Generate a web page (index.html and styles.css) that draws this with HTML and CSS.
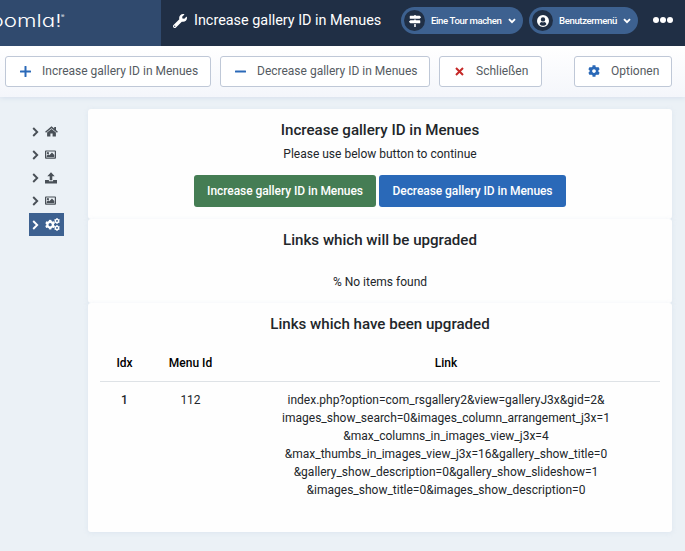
FILE: index.html
```html
<!DOCTYPE html>
<html lang="de">
<head>
<meta charset="utf-8">
<title>Increase gallery ID in Menues</title>
<link rel="stylesheet" href="styles.css">
</head>
<body>
<svg class="defs" aria-hidden="true">
  <symbol id="wrench" viewBox="0 0 512 512"><path d="M507.73 109.1c-2.24-9.03-13.54-12.09-20.12-5.51l-74.36 74.36-67.88-11.31-11.31-67.88 74.36-74.36c6.62-6.62 3.43-17.9-5.66-20.16-47.38-11.74-99.55.91-136.58 37.93-39.64 39.64-50.55 97.1-34.05 147.2L18.74 402.76c-24.99 24.99-24.99 65.51 0 90.5 24.99 24.99 65.51 24.99 90.5 0l213.21-213.21c50.12 16.71 107.47 5.68 147.37-34.22 37.07-37.07 49.7-89.32 37.91-136.73zM64 472c-13.25 0-24-10.75-24-24 0-13.26 10.75-24 24-24s24 10.74 24 24c0 13.25-10.75 24-24 24z"/></symbol>
  <symbol id="cog" viewBox="0 0 512 512"><path d="M487.4 315.7l-42.6-24.6c4.3-23.2 4.3-47 0-70.2l42.6-24.6c4.9-2.8 7.1-8.6 5.5-14-11.1-35.6-30-67.8-54.7-94.6-3.8-4.1-10-5.1-14.8-2.3L380.8 110c-17.9-15.4-38.5-27.3-60.8-35.1V25.8c0-5.6-3.9-10.5-9.4-11.7-36.7-8.2-74.3-7.8-109.2 0-5.5 1.2-9.4 6.1-9.4 11.7V75c-22.2 7.9-42.8 19.8-60.8 35.1L88.7 85.5c-4.9-2.8-11-1.9-14.8 2.3-24.7 26.7-43.6 58.9-54.7 94.6-1.7 5.4.6 11.2 5.5 14L67.3 221c-4.3 23.2-4.3 47 0 70.2l-42.6 24.6c-4.9 2.8-7.1 8.6-5.5 14 11.1 35.6 30 67.8 54.7 94.6 3.8 4.1 10 5.1 14.8 2.3l42.6-24.6c17.9 15.4 38.5 27.3 60.8 35.1v49.2c0 5.6 3.9 10.5 9.4 11.7 36.7 8.2 74.3 7.8 109.2 0 5.5-1.2 9.4-6.1 9.4-11.7v-49.2c22.2-7.9 42.8-19.8 60.8-35.1l42.6 24.6c4.9 2.8 11 1.9 14.8-2.3 24.7-26.7 43.6-58.9 54.7-94.6 1.5-5.5-.7-11.3-5.6-14.1zM256 336c-44.1 0-80-35.9-80-80s35.9-80 80-80 80 35.9 80 80-35.9 80-80 80z"/></symbol>
  <symbol id="signs" viewBox="0 0 512 512"><path d="M507.31 84.69L464 41.37c-6-6-14.14-9.37-22.63-9.37H288V16c0-8.84-7.16-16-16-16h-32c-8.84 0-16 7.16-16 16v16H56c-13.25 0-24 10.75-24 24v80c0 13.25 10.75 24 24 24h385.37c8.49 0 16.62-3.37 22.63-9.37l43.31-43.31c6.25-6.26 6.25-16.38 0-22.63zM224 496c0 8.84 7.16 16 16 16h32c8.84 0 16-7.16 16-16V384h-64v112zm232-272H288v-32h-64v32H70.63c-8.49 0-16.62 3.37-22.63 9.37L4.69 276.69c-6.25 6.25-6.25 16.38 0 22.63L48 342.63c6 6 14.14 9.37 22.63 9.37H456c13.25 0 24-10.75 24-24v-80c0-13.25-10.75-24-24-24z"/></symbol>
  <symbol id="user" viewBox="0 0 12 12"><path fill-rule="evenodd" d="M6 0a6 6 0 1 0 0 12A6 6 0 0 0 6 0zM6 2.2a2.2 2.2 0 1 1 0 4.4 2.2 2.2 0 0 1 0-4.4zM2.6 9.2C3 7.8 4 7.1 4.7 7.1c.9.4 1.700.4 2.600 0 .8 0 1.800.7 2.100 2.100A4.600 4.600 0 0 1 2.600 9.200z"/></symbol>
  <symbol id="down" viewBox="0 0 8 6"><path d="M1 1.200l3 3 3-3" fill="none" stroke="currentColor" stroke-width="1.900"/></symbol>
  <symbol id="right" viewBox="0 0 7 10"><path d="M1.200 1l4 4-4 4" fill="none" stroke="currentColor" stroke-width="1.900"/></symbol>
  <symbol id="home" viewBox="0 0 13 11"><path d="M6.500.3L.1 5.700l.9 1.100 5.500-4.600 5.500 4.600.9-1.100-1.900-1.600V1H9.200v1.500z"/><path d="M6.500 3L2.100 6.600v3.900h3.300V7.600h2.200v2.900h3.300V6.600z"/></symbol>
  <symbol id="image" viewBox="0 0 12 9"><path fill-rule="evenodd" d="M1 0h10a1 1 0 0 1 1 1v7a1 1 0 0 1-1 1H1a1 1 0 0 1-1-1V1a1 1 0 0 1 1-1zM1.300 1.300v6.400h9.400V1.300z"/><circle cx="3.200" cy="3.100" r="1.200"/><path d="M1.800 7.300V5.800l1.700-1.600 1.200 1.200 2.900-3L10.200 5v2.300z"/></symbol>
  <symbol id="upload" viewBox="0 0 12 12"><path d="M6 .2L2.300 4.300h2.400v4h2.600v-4h2.400z"/><path d="M0 8h3.900v1.200h4.200V8H12v3.500H0z"/></symbol>
  <symbol id="cogs" viewBox="0 0 15 13"><use href="#cog" x="0" y="1.500" width="10.300" height="10.300"/><use href="#cog" x="9" y="0" width="6" height="6"/><use href="#cog" x="9" y="7" width="6" height="6"/></symbol>
</svg>
<header class="header">
  <div class="brand"><svg class="logo" width="70" height="46"><text class="word" x="-9.500" y="27" textLength="71" lengthAdjust="spacingAndGlyphs">oomla!</text><text class="reg" x="61" y="18">®</text></svg></div>
  <div class="page-title"><svg class="i-wrench"><use href="#wrench"/></svg><span>Increase gallery ID in Menues</span></div>
  <div class="pill pill-tour"><span class="dot"><svg class="i-12"><use href="#signs"/></svg></span><span class="label">Eine Tour machen</span><svg class="i-down"><use href="#down"/></svg></div>
  <div class="pill pill-user"><span class="dot"><svg class="i-12"><use href="#user"/></svg></span><span class="label">Benutzermenü</span><svg class="i-down"><use href="#down"/></svg></div>
  <div class="more"><i></i><i></i><i></i></div>
</header>
<nav class="toolbar">
  <button class="tool t-inc"><svg class="i-tool" viewBox="0 0 11 11"><path d="M5.500.7v9.600M.7 5.500h9.600"/></svg><span>Increase gallery ID in Menues</span></button>
  <button class="tool t-dec"><svg class="i-tool" viewBox="0 0 11 11"><path d="M.7 5.500h9.600"/></svg><span>Decrease gallery ID in Menues</span></button>
  <button class="tool t-close"><svg class="i-close" viewBox="0 0 9 9"><path d="M1 1l7 7M8 1L1 8"/></svg><span>Schließen</span></button>
  <button class="tool t-opt"><svg class="i-cog"><use href="#cog"/></svg><span>Optionen</span></button>
</nav>
<div class="body">
  <aside class="side">
    <div class="item"><svg class="i-right"><use href="#right"/></svg><svg class="i-home"><use href="#home"/></svg></div>
    <div class="item"><svg class="i-right"><use href="#right"/></svg><svg class="i-image"><use href="#image"/></svg></div>
    <div class="item"><svg class="i-right"><use href="#right"/></svg><svg class="i-upload"><use href="#upload"/></svg></div>
    <div class="item"><svg class="i-right"><use href="#right"/></svg><svg class="i-image"><use href="#image"/></svg></div>
    <div class="item active"><svg class="i-right"><use href="#right"/></svg><svg class="i-cogs"><use href="#cogs"/></svg></div>
  </aside>
  <main class="main">
    <section class="card card-action">
      <h2>Increase gallery ID in Menues</h2>
      <p>Please use below button to continue</p>
      <div class="buttons"><button class="btn green">Increase gallery ID in Menues</button><button class="btn blue">Decrease gallery ID in Menues</button></div>
    </section>
    <section class="card card-empty">
      <h2>Links which will be upgraded</h2>
      <p>% No items found</p>
    </section>
    <section class="card card-table">
      <h2>Links which have been upgraded</h2>
      <table>
        <thead><tr><th class="c-idx">Idx</th><th class="c-menu">Menu Id</th><th>Link</th></tr></thead>
        <tbody><tr><td class="idx">1</td><td>112</td><td class="link">index.php?option=com_rsgallery2&amp;view=galleryJ3x&amp;gid=2&amp;<br>images_show_search=0&amp;images_column_arrangement_j3x=1<br>&amp;max_columns_in_images_view_j3x=4<br>&amp;max_thumbs_in_images_view_j3x=16&amp;gallery_show_title=0<br>&amp;gallery_show_description=0&amp;gallery_show_slideshow=1<br>&amp;images_show_title=0&amp;images_show_description=0</td></tr></tbody>
      </table>
    </section>
  </main>
</div>
</body>
</html>
```
FILE: styles.css
```css
* { box-sizing: border-box; }
body { margin: 0; height: 551px; overflow: hidden; background: #ebf1f6; color: #22262a; font: 12px/18px Roboto, sans-serif; }
svg { display: block; flex: none; fill: currentColor; }
.defs { position: absolute; width: 0; height: 0; }
h2, p { margin: 0; text-align: center; }
button { font: inherit; margin: 0; }

.header { position: relative; z-index: 1; display: flex; height: 46px; background: #202f45; color: #fff; }
.brand { width: 161px; background: #304a6e; flex: none; }
.word { font: 300 17.5px Inter, sans-serif; font-feature-settings: "cv11"; }
.reg { font: 5px Inter, sans-serif; }
.page-title { display: flex; width: 240px; height: 41px; padding-left: 12px; align-items: center; gap: 7px; font-size: 14.4px; flex: none; white-space: nowrap; }
.i-wrench { width: 14px; height: 14px; }
.pill { display: flex; align-items: center; height: 27px; margin-top: 7px; padding: 0 7px 0 3px; border-radius: 14px; background: #3d6190; font-size: 9.6px; font-weight: 500; letter-spacing: -0.38px; flex: none; white-space: nowrap; }
.pill-tour { width: 122px; }
.pill-user { width: 109px; margin-left: 6px; }
.dot { display: flex; width: 21px; height: 21px; align-items: center; justify-content: center; border-radius: 50%; background: #202f45; }
.i-12 { width: 12px; height: 12px; }
.label { margin-left: 6px; }
.i-down { width: 8px; height: 6px; margin-left: auto; }
.more { display: flex; gap: 1px; margin: 17px 0 0 15px; }
.more i { width: 6px; height: 6px; border-radius: 50%; background: #fff; }

.toolbar { display: flex; height: 51px; padding: 10px 13px 0 5px; background: linear-gradient(#fff, #f4f6fb); box-shadow: 0 1px 5px #d5dfec; }
.tool { display: flex; align-items: center; height: 31px; padding: 0 0 1px; border: 1px solid #bfc8d7; border-radius: 3px; background: #fff; color: #555b62; white-space: nowrap; }
.i-tool { width: 11px; height: 11px; fill: none; stroke: #2a69b8; stroke-width: 2; stroke-linecap: round; }
.t-inc { width: 206px; padding-left: 14px; gap: 11px; }
.t-dec { width: 210px; margin-left: 9px; padding-left: 14px; gap: 11px; }
.t-close { width: 103px; margin-left: 9px; padding-left: 15px; gap: 12px; }
.i-close { width: 9px; height: 9px; fill: none; stroke: #c52827; stroke-width: 2; }
.t-opt { width: 98px; margin-left: auto; padding-left: 13px; gap: 11px; }
.i-cog { width: 12px; height: 12px; color: #2a69b8; }

.body { display: flex; padding: 12px 13px 0 29px; }
.side { width: 59px; padding-top: 12px; color: #495057; }
.item { display: flex; align-items: center; width: 35px; height: 23px; padding: 0 0 2px 3px; gap: 6px; }
.active { padding-bottom: 0; background: #3d6190; color: #fff; }
.i-right { width: 7px; height: 10px; }
.i-home { width: 13px; height: 11px; }
.i-image { width: 11px; height: 9px; }
.i-upload { width: 12px; height: 12px; }
.i-cogs { width: 15px; height: 13px; }

.main { flex: 1; }
.card { border-radius: 3px; background: #fefefe; box-shadow: 0 1px 5px rgba(190, 206, 226, .3); }
.card h2 { font-size: 15.1px; line-height: 18px; font-weight: 500; }
.card-action { height: 110px; padding-top: 12px; }
.card-action p { margin-top: 6px; }
.buttons { display: flex; justify-content: center; gap: 3px; margin-top: 12px; }
.btn { height: 32px; padding: 0; border: 0; border-radius: 3px; color: #fff; font-weight: 500; letter-spacing: -0.07px; white-space: nowrap; }
.green { width: 182px; background: #457d54; }
.blue { width: 187px; background: #2a69b8; }
.card-empty { height: 84px; padding-top: 12px; }
.card-empty p { margin-top: 24px; }
.card-table { height: 229px; padding: 12px 12px 0; }
table { width: 100%; margin-top: 12px; border-collapse: collapse; table-layout: fixed; text-align: center; }
th { height: 36px; padding: 0; border-bottom: 1px solid #dee2e6; color: #000; font-weight: 500; }
td { padding: 9px 0; vertical-align: top; }
.c-idx { width: 49px; }
.c-menu { width: 83px; }
.idx { font-weight: 500; }
```
